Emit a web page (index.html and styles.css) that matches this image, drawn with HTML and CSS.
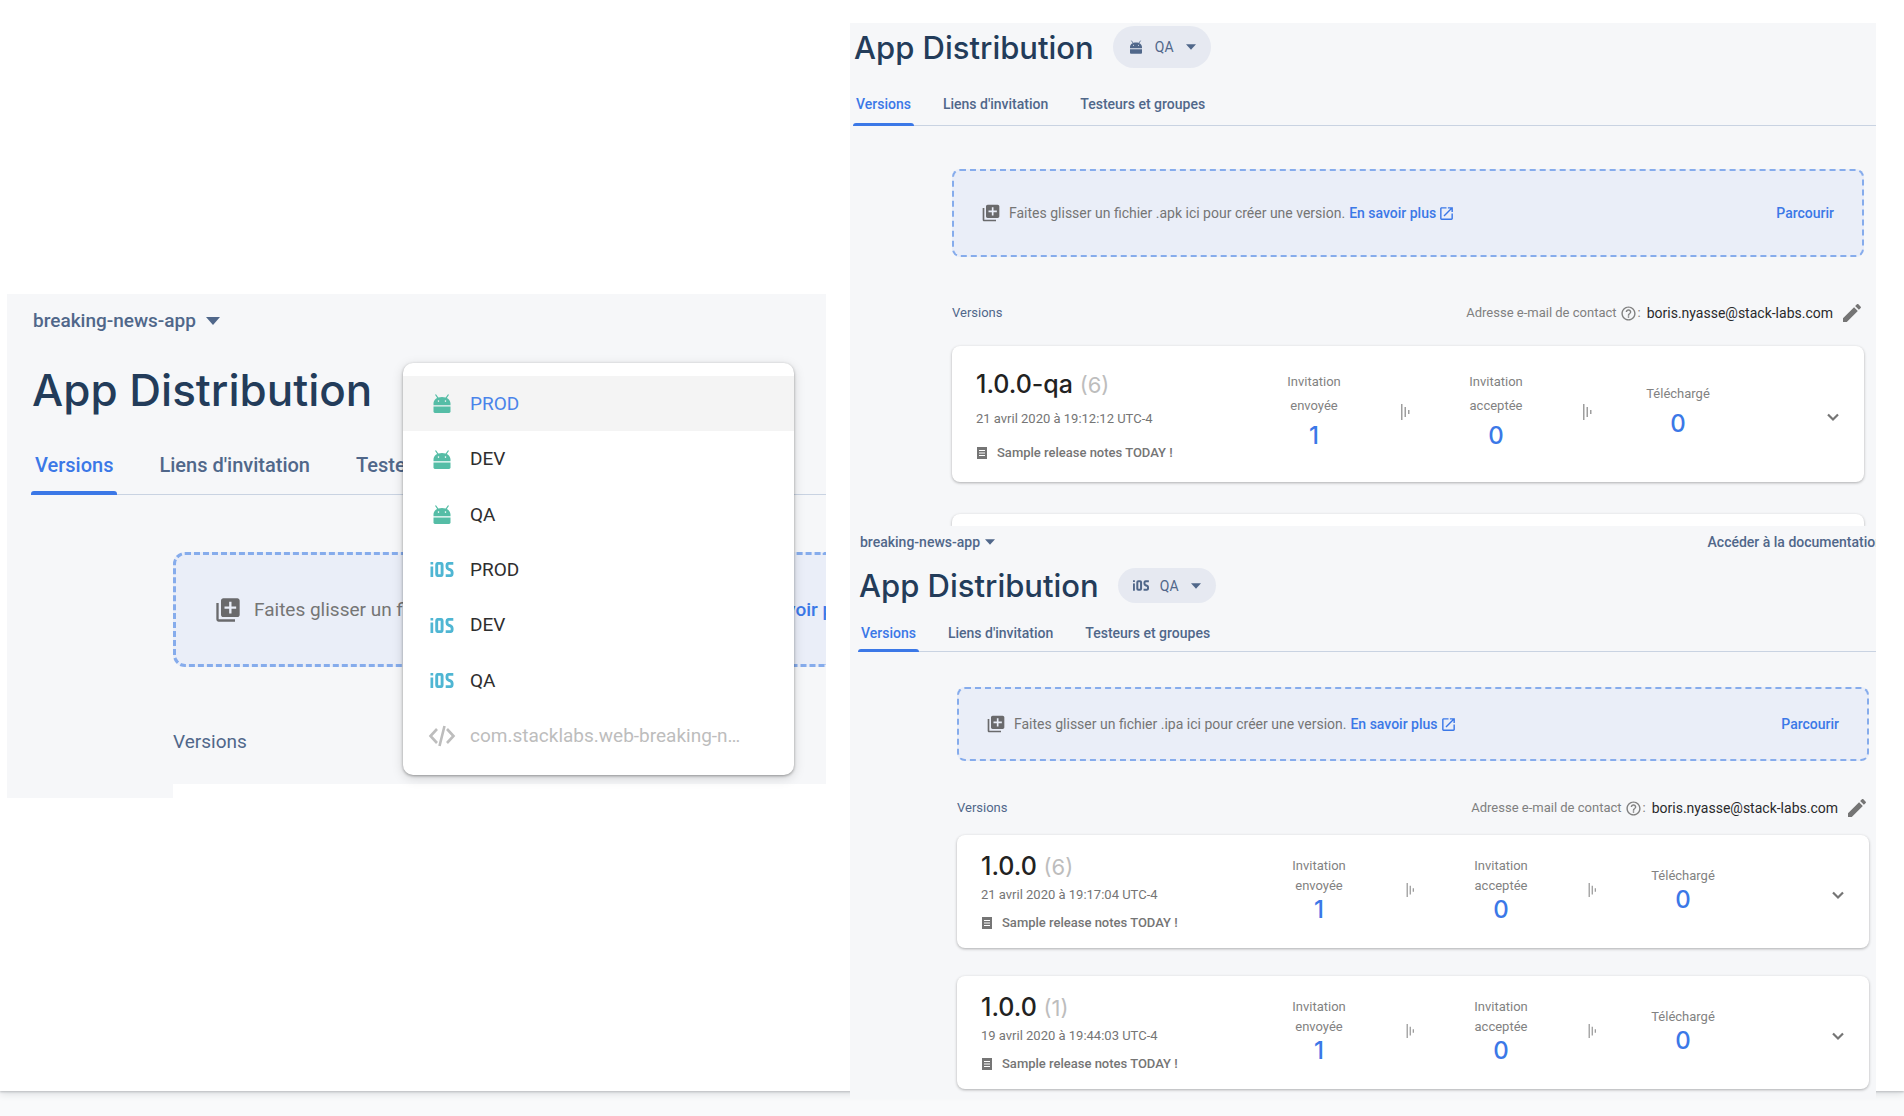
FILE: index.html
```html
<!DOCTYPE html>
<html lang="fr">
<head>
<meta charset="utf-8">
<meta name="viewport" content="width=device-width, initial-scale=1">
<title>App Distribution</title>
<link rel="stylesheet" href="styles.css">
</head>
<body>
<svg class="sprite" aria-hidden="true">
  <symbol id="android" viewBox="0 0 17 19">
    <path d="M2 .5 4.500 4.200M15 .5l-2.500 3.700" fill="none" stroke="currentColor" stroke-width="1.200"/>
    <path fill-rule="evenodd" d="M0 11.200V9.500C0 5.800 3.500 3 8.500 3S17 5.800 17 9.500v1.700zM5 6.300a.8.8 0 1 0 0 1.600.8.8 0 0 0 0-1.600zm7 0a.8.8 0 1 0 0 1.600.8.8 0 0 0 0-1.600z"/>
    <path d="M0 12.600h17v5A1.400 1.400 0 0 1 15.600 19H1.400A1.400 1.400 0 0 1 0 17.600z"/>
  </symbol>
  <symbol id="ios" viewBox="0 0 23 15">
    <rect width="2.700" height="2.500"/>
    <rect y="4.500" width="2.700" height="10.500"/>
    <rect x="6.200" y="1.400" width="5.400" height="12.200" rx="1.400" fill="none" stroke="currentColor" stroke-width="2.900"/>
    <path d="M22.800 1.400h-4.600q-1.700 0-1.700 1.700v2q0 1.500 1.500 2l2 .8q1.600.7 1.600 2.200v1.800q0 1.700-1.700 1.700h-4.700" fill="none" stroke="currentColor" stroke-width="2.900"/>
  </symbol>
  <symbol id="code" viewBox="0 0 28 22">
    <path d="M9 4 2.500 11 9 18M19 4l6.500 7-6.500 7M16.500 1l-5 20" fill="none" stroke="currentColor" stroke-width="2.600"/>
  </symbol>
  <symbol id="caret" viewBox="0 0 14 8"><path d="M0 0h14L7 8z"/></symbol>
  <symbol id="add" viewBox="0 0 24 24"><path d="M4 6H2v14c0 1.100.9 2 2 2h14v-2H4V6zm16-4H8c-1.100 0-2 .9-2 2v12c0 1.100.9 2 2 2h12c1.100 0 2-.9 2-2V4c0-1.100-.9-2-2-2zm-1 9h-4v4h-2v-4H9V9h4V5h2v4h4v2z"/></symbol>
  <symbol id="open" viewBox="0 0 24 24"><path d="M19 19H5V5h7V3H5c-1.110 0-2 .9-2 2v14c0 1.100.89 2 2 2h14c1.100 0 2-.9 2-2v-7h-2v7zM14 3v2h3.590l-9.830 9.830 1.410 1.410L19 6.410V10h2V3h-7z"/></symbol>
  <symbol id="help" viewBox="0 0 24 24"><path d="M11 18h2v-2h-2v2zm1-16C6.480 2 2 6.480 2 12s4.480 10 10 10 10-4.480 10-10S17.520 2 12 2zm0 18c-4.410 0-8-3.590-8-8s3.590-8 8-8 8 3.590 8 8-3.590 8-8 8zm0-14c-2.210 0-4 1.790-4 4h2c0-1.100.9-2 2-2s2 .9 2 2c0 2-3 1.750-3 5h2c0-2.250 3-2.500 3-5 0-2.210-1.790-4-4-4z"/></symbol>
  <symbol id="pencil" viewBox="0 0 24 24"><path d="M3 17.250V21h3.750L17.810 9.940l-3.750-3.750L3 17.250zM20.710 7.040c.39-.39.39-1.020 0-1.410l-2.340-2.340c-.39-.39-1.020-.39-1.410 0l-1.830 1.830 3.750 3.750 1.830-1.830z"/></symbol>
  <symbol id="notes" viewBox="0 0 10 12"><path fill-rule="evenodd" d="M0 0h10v12H0zM2 3v1h6V3zM2 5.500v1h6v-1zM2 8v1h6V8z"/></symbol>
  <symbol id="funnel" viewBox="0 0 9 16"><path d="M0 0h1.500v16H0zM3.500 3H5v10H3.500zM7 6h1.500v4H7z"/></symbol>
  <symbol id="chevron" viewBox="0 0 24 24"><path d="M7 9.500l5 5 5-5" fill="none" stroke="currentColor" stroke-width="2.200"/></symbol>
</svg>

<main class="sheet">
  <section class="panel panel-large">
    <button class="project" type="button">breaking-news-app <svg><use href="#caret"/></svg></button>
    <header class="header"><h1>App Distribution</h1></header>
    <nav class="tabs">
      <a class="active" href="#">Versions</a><a href="#">Liens d'invitation</a><a href="#">Testeurs et groupes</a>
    </nav>
    <div class="content">
      <div class="dropzone">
        <svg class="add"><use href="#add"/></svg>
        <p>Faites glisser un fichier .apk ici pour créer une version.</p>
        <a href="#">En savoir plus</a>
      </div>
      <h2>Versions</h2>
      <div class="card-edge"></div>
    </div>
    <div class="menu" role="menu">
      <button class="selected" type="button" role="menuitem"><svg class="android"><use href="#android"/></svg><span>PROD</span></button>
      <button type="button" role="menuitem"><svg class="android"><use href="#android"/></svg><span>DEV</span></button>
      <button type="button" role="menuitem"><svg class="android"><use href="#android"/></svg><span>QA</span></button>
      <button type="button" role="menuitem"><svg class="ios"><use href="#ios"/></svg><span>PROD</span></button>
      <button type="button" role="menuitem"><svg class="ios"><use href="#ios"/></svg><span>DEV</span></button>
      <button type="button" role="menuitem"><svg class="ios"><use href="#ios"/></svg><span>QA</span></button>
      <button type="button" role="menuitem" disabled><svg class="code"><use href="#code"/></svg><span>com.stacklabs.web-breaking-n…</span></button>
    </div>
  </section>

  <div class="stack">
    <section class="panel panel-tall">
      <header class="header">
        <h1>App Distribution</h1>
        <button class="chip" type="button"><span class="platform"><svg class="android"><use href="#android"/></svg></span>QA<svg class="caret"><use href="#caret"/></svg></button>
      </header>
      <nav class="tabs">
        <a class="active" href="#">Versions</a><a href="#">Liens d'invitation</a><a href="#">Testeurs et groupes</a>
      </nav>
      <div class="content">
        <div class="dropzone">
          <svg class="add"><use href="#add"/></svg>
          <p>Faites glisser un fichier .apk ici pour créer une version.</p>
          <a href="#">En savoir plus<svg><use href="#open"/></svg></a>
          <button type="button">Parcourir</button>
        </div>
        <div class="list-head">
          <h2>Versions</h2>
          <p class="contact">Adresse e-mail de contact<svg class="help"><use href="#help"/></svg>:<strong>boris.nyasse@stack-labs.com</strong></p>
          <button type="button" aria-label="Modifier"><svg><use href="#pencil"/></svg></button>
        </div>
        <article class="card">
          <div class="info">
            <h3>1.0.0-qa <span>(6)</span></h3>
            <time>21 avril 2020 à 19:12:12 UTC-4</time>
            <p><svg><use href="#notes"/></svg>Sample release notes TODAY !</p>
          </div>
          <div class="stat">Invitation<br>envoyée<b>1</b></div>
          <svg class="funnel"><use href="#funnel"/></svg>
          <div class="stat">Invitation<br>acceptée<b>0</b></div>
          <svg class="funnel"><use href="#funnel"/></svg>
          <div class="stat">Téléchargé<b>0</b></div>
          <button type="button" aria-label="Développer"><svg><use href="#chevron"/></svg></button>
        </article>
        <div class="card-edge"></div>
      </div>
    </section>

    <section class="panel panel-compact">
      <div class="topbar">
        <button class="project" type="button">breaking-news-app <svg><use href="#caret"/></svg></button>
        <a href="#">Accéder à la documentation</a>
      </div>
      <header class="header">
        <h1>App Distribution</h1>
        <button class="chip" type="button"><span class="platform"><svg class="ios"><use href="#ios"/></svg></span>QA<svg class="caret"><use href="#caret"/></svg></button>
      </header>
      <nav class="tabs">
        <a class="active" href="#">Versions</a><a href="#">Liens d'invitation</a><a href="#">Testeurs et groupes</a>
      </nav>
      <div class="content">
        <div class="dropzone">
          <svg class="add"><use href="#add"/></svg>
          <p>Faites glisser un fichier .ipa ici pour créer une version.</p>
          <a href="#">En savoir plus<svg><use href="#open"/></svg></a>
          <button type="button">Parcourir</button>
        </div>
        <div class="list-head">
          <h2>Versions</h2>
          <p class="contact">Adresse e-mail de contact<svg class="help"><use href="#help"/></svg>:<strong>boris.nyasse@stack-labs.com</strong></p>
          <button type="button" aria-label="Modifier"><svg><use href="#pencil"/></svg></button>
        </div>
        <article class="card">
          <div class="info">
            <h3>1.0.0 <span>(6)</span></h3>
            <time>21 avril 2020 à 19:17:04 UTC-4</time>
            <p><svg><use href="#notes"/></svg>Sample release notes TODAY !</p>
          </div>
          <div class="stat">Invitation<br>envoyée<b>1</b></div>
          <svg class="funnel"><use href="#funnel"/></svg>
          <div class="stat">Invitation<br>acceptée<b>0</b></div>
          <svg class="funnel"><use href="#funnel"/></svg>
          <div class="stat">Téléchargé<b>0</b></div>
          <button type="button" aria-label="Développer"><svg><use href="#chevron"/></svg></button>
        </article>
        <article class="card">
          <div class="info">
            <h3>1.0.0 <span>(1)</span></h3>
            <time>19 avril 2020 à 19:44:03 UTC-4</time>
            <p><svg><use href="#notes"/></svg>Sample release notes TODAY !</p>
          </div>
          <div class="stat">Invitation<br>envoyée<b>1</b></div>
          <svg class="funnel"><use href="#funnel"/></svg>
          <div class="stat">Invitation<br>acceptée<b>0</b></div>
          <svg class="funnel"><use href="#funnel"/></svg>
          <div class="stat">Téléchargé<b>0</b></div>
          <button type="button" aria-label="Développer"><svg><use href="#chevron"/></svg></button>
        </article>
      </div>
    </section>
  </div>
</main>
</body>
</html>
```
FILE: styles.css
```css
:root {
  --ink: #233c5a;
  --slate: #50678a;
  --blue: #3b78e7;
  --grey: #757575;
  --surface: #f6f7f9;
}

* { box-sizing: border-box; }

body {
  margin: 0;
  min-height: 100vh;
  background: #f9fafb;
  font: 400 14px/20px Roboto, "Liberation Sans", sans-serif;
  color: var(--grey);
}

h1, h2, h3, p { margin: 0; font-weight: 400; }
a { color: inherit; text-decoration: none; }
svg { display: block; flex: none; fill: currentColor; }
.sprite { position: absolute; width: 0; height: 0; }
button {
  padding: 0;
  border: 0;
  background: none;
  font: inherit;
  color: inherit;
  text-align: left;
  white-space: nowrap;
}

.sheet {
  display: grid;
  grid-template-columns: 819fr 1026fr;
  gap: 24px;
  align-items: start;
  padding: 23px 28px 0 7px;
  background: #fff;
  box-shadow: 0 1px 2px #bbbdc0, 0 2px 8px #d5d7da;
}

/* The right-hand column hangs a little over the sheet's lower edge. */
.stack { min-width: 0; margin-bottom: -8px; }

.panel {
  position: relative;
  overflow: hidden;
  background: var(--surface);
}

.project {
  display: flex;
  align-items: center;
  font-weight: 500;
  color: var(--slate);
}
.project svg { width: 10px; height: 6px; margin-left: 5px; }

.header { display: flex; align-items: center; gap: 19px; }
h1 {
  font-family: Inter, Roboto, sans-serif;
  font-weight: 500;
  font-size: 31px;
  line-height: 35px;
  color: var(--ink);
  white-space: nowrap;
}

.chip {
  display: flex;
  align-items: center;
  height: 35px;
  padding: 0 15px 0 14px;
  border-radius: 21px;
  background: #e6e9f1;
  font-size: 14px;
  color: var(--slate);
}
.chip .platform { display: flex; justify-content: center; width: 18px; margin-right: 10px; }
.chip .android { width: 12px; height: 14px; }
.chip .ios { width: 16px; height: 11px; }
.chip .caret { width: 10px; height: 6px; margin-left: 12px; }

.tabs {
  display: flex;
  gap: 26px;
  margin-left: 3px;
  border-bottom: 1px solid #c9d3e2;
  font-weight: 500;
  color: var(--slate);
  white-space: nowrap;
}
.tabs a {
  margin-bottom: -1px;
  padding: 20px 3px 6px;
  border-bottom: 3px solid transparent;
}
.tabs .active { position: relative; color: var(--blue); }
.tabs .active::after {
  content: "";
  position: absolute;
  left: 0;
  right: 0;
  bottom: -3px;
  height: 3px;
  border-radius: 3px 3px 0 0;
  background: var(--blue);
}

.dropzone {
  display: flex;
  align-items: center;
  padding: 0 28px 0 27px;
  border: 2px dashed #86acec;
  border-radius: 8px;
  background: #eaeef8;
  font-weight: 500;
  white-space: nowrap;
}
.dropzone .add { width: 20px; height: 20px; margin-right: 8px; color: #6a6a6c; }
.dropzone a { display: flex; align-items: center; margin-left: 4px; color: var(--blue); }
.dropzone a svg { width: 17px; height: 17px; margin-left: 2px; }
.dropzone button { margin-left: auto; color: var(--blue); font-weight: 500; }

h2 { font-size: 13px; line-height: 24px; color: var(--slate); }

.list-head { display: flex; align-items: center; justify-content: space-between; }
.list-head h2 { flex: 1; }
.contact { display: flex; align-items: center; font-size: 13px; white-space: nowrap; color: #808080; }
.contact .help { width: 17px; height: 17px; margin: 0 1px 0 3px; }
.contact strong { margin-left: 6px; font-size: 14px; font-weight: 400; color: #2a2a2c; }
.list-head button { margin-left: 7px; }
.list-head button svg { width: 24px; height: 24px; }

.card, .card-edge {
  border-radius: 8px;
  background: #fff;
  box-shadow: 0 1px 3px rgba(0, 0, 0, .3);
}
.card {
  display: grid;
  grid-template-columns: 1fr 120px 62px 120px 62px 120px 126px;
  align-items: center;
  padding-left: 24px;
  font-size: 13px;
}
.card-edge { height: 12px; border-radius: 8px 8px 0 0; }

h3 {
  font-family: Inter, Roboto, sans-serif;
  font-weight: 500;
  font-size: 25px;
  line-height: 24px;
  color: #222;
}
h3 span { font-size: 22px; font-weight: 400; color: #bdbdbd; }
.info { padding-top: 2px; }
.info time { display: block; margin-top: 8px; line-height: 16px; }
.info p { display: flex; align-items: center; margin-top: 12px; line-height: 16px; font-weight: 500; }
.info p svg { width: 10px; height: 12px; margin: 0 10px 0 1px; }

.stat { padding-bottom: 4px; text-align: center; line-height: 20px; color: #828282; }
.stat b {
  display: block;
  font: 500 24px/28px Inter, Roboto, sans-serif;
  color: var(--blue);
}
.funnel { justify-self: center; width: 9px; height: 14px; margin-bottom: 4px; color: #9e9e9e; }
.card button { justify-self: end; margin-right: 19px; padding-top: 6px; }
.card button svg { width: 24px; height: 24px; }

/* Android release page: taller rows */
.panel-tall .header { padding: 3px 0 0 4px; }
.panel-tall .chip { height: 42px; }
.panel-tall .tabs a { padding: 26px 3px 9px; }
.panel-tall .content { padding: 43px 12px 0 102px; }
.panel-tall .dropzone { height: 88px; }
.panel-tall .list-head { margin: 44px 0 21px; }
.panel-tall .card { min-height: 136px; margin-bottom: 32px; }
.panel-tall h3 { line-height: 28px; }
.panel-tall .info { padding-top: 4px; }
.panel-tall .info time { margin-top: 10px; line-height: 20px; }
.panel-tall .info p { margin-top: 14px; line-height: 20px; }
.panel-tall .stat { line-height: 24px; }
.panel-tall .stat b { line-height: 36px; }
.panel-tall .funnel { height: 16px; }

/* iOS release page */
.panel-compact .topbar { display: flex; justify-content: space-between; padding: 6px 0 16px 10px; }
.panel-compact .topbar a { margin-right: -7px; font-weight: 500; color: var(--slate); white-space: nowrap; }
.panel-compact .header { padding-left: 9px; }
.panel-compact .tabs { margin-left: 8px; }
.panel-compact .content { padding: 35px 7px 10px 107px; }
.panel-compact .dropzone { height: 74px; }
.panel-compact .list-head { margin: 35px 0 15px; }
.panel-compact .card { min-height: 113px; }
.panel-compact .card + .card { margin-top: 28px; }

/* Enlarged page with the open app menu */
.panel-large { margin-top: 271px; font-size: 19px; line-height: 24px; }
.panel-large .project { padding: 15px 0 0 26px; }
.panel-large .project svg { width: 14px; height: 8px; margin-left: 10px; }
.panel-large .header { padding: 29px 0 0 25px; }
.panel-large h1 { font-size: 44px; line-height: 56px; }
.panel-large .tabs { gap: 38px; margin-left: 24px; font-size: 20px; }
.panel-large .tabs a { padding: 35px 4px 15px; }
.panel-large .tabs .active::after { height: 4px; }
.panel-large .content { padding: 57px 0 0 166px; }
.panel-large .dropzone {
  height: 115px;
  padding: 0 0 0 38px;
  border-width: 3px;
  border-right: 0;
  border-radius: 12px 0 0 12px;
}
.panel-large .dropzone .add { width: 28px; height: 28px; margin-right: 12px; }
.panel-large .dropzone a { margin-left: 30px; }
.panel-large h2 { margin: 63px 0 30px; font-size: 19px; }
.panel-large .card-edge { height: 14px; border-radius: 0; box-shadow: none; }

.menu {
  position: absolute;
  top: 69px;
  right: 32px;
  display: grid;
  grid-auto-rows: 1fr;
  width: 391px;
  height: 412px;
  padding: 13px 0 11px;
  border-radius: 10px;
  background: #fff;
  box-shadow: 0 1px 3px rgba(0, 0, 0, .35), 0 3px 12px rgba(0, 0, 0, .15);
}
.menu button { display: flex; align-items: center; gap: 14px; padding-left: 25px; color: #2e2e2e; }
.menu .selected { background: #f4f4f4; color: #4a84ea; }
.menu button:disabled { color: #bdbdbd; }
.menu svg { width: 28px; height: 22px; }
.menu .android { height: 19px; color: #55bda6; }
.menu .ios { height: 15px; color: #4fb6d3; }
```
